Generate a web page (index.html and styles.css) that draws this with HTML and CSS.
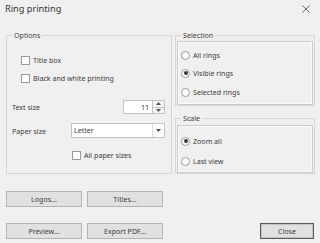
FILE: index.html
```html
<!DOCTYPE html>
<html lang="en">
<head>
  <meta charset="UTF-8">
  <title>Ring printing</title>
  <link rel="stylesheet" href="styles.css">
</head>
<body>
  <div class="dialog">
    <!-- Title bar -->
    <div class="titlebar">
      <span class="title">Ring printing</span>
      <svg class="close-x" width="8" height="8" viewBox="0 0 8 8">
        <path d="M0.5 0.5 L7.5 7.5 M7.5 0.5 L0.5 7.5" stroke="#444" stroke-width="0.8" fill="none"/>
      </svg>
    </div>

    <div class="groups">
      <fieldset class="group options">
        <legend>Options</legend>
        <label class="row check-row first"><span class="checkbox"></span>Title box</label>
        <label class="row check-row second"><span class="checkbox"></span>Black and white printing</label>
        <div class="row spin-row">
          <span>Text size</span>
          <div class="spin">
            <span class="spin-value">11</span>
            <div class="spin-buttons">
              <span class="spin-btn"><svg width="5" height="3" viewBox="0 0 5 3"><path d="M0 3 L2.5 0 L5 3 Z" fill="#555"/></svg></span>
              <span class="spin-btn"><svg width="5" height="3" viewBox="0 0 5 3"><path d="M0 0 L2.5 3 L5 0 Z" fill="#555"/></svg></span>
            </div>
          </div>
        </div>
        <div class="row combo-row">
          <span class="combo-label">Paper size</span>
          <div class="combo">
            <span class="combo-value">Letter</span>
            <span class="combo-btn"><svg width="5" height="3" viewBox="0 0 5 3"><path d="M0 0 L2.5 3 L5 0 Z" fill="#555"/></svg></span>
          </div>
        </div>
        <label class="row check-row all-sizes"><span class="checkbox"></span>All paper sizes</label>
      </fieldset>

      <div class="right-col">
        <fieldset class="group selection">
          <legend>Selection</legend>
          <div class="panel selection-panel">
            <label class="radio-row"><span class="radio"></span>All rings</label>
            <label class="radio-row"><span class="radio checked"></span>Visible rings</label>
            <label class="radio-row"><span class="radio"></span>Selected rings</label>
          </div>
        </fieldset>
        <fieldset class="group scale">
          <legend>Scale</legend>
          <div class="panel scale-panel">
            <label class="radio-row"><span class="radio checked"></span>Zoom all</label>
            <label class="radio-row"><span class="radio"></span>Last view</label>
          </div>
        </fieldset>
      </div>
    </div>

    <div class="button-row row-one">
      <button class="btn">Logos...</button>
      <button class="btn">Titles...</button>
    </div>
    <div class="button-row row-two">
      <button class="btn">Preview...</button>
      <button class="btn">Export PDF...</button>
      <button class="btn close-btn">Close</button>
    </div>
  </div>
</body>
</html>
```

FILE: styles.css
```css
/* Basic reset */
html, body {
  margin: 0;
  padding: 0;
  background: #f0f0f0;
}
body {
  font-family: "Noto Sans", "Open Sans", sans-serif;
  font-size: 7.1px;
  color: #3c3c3c;
}
.dialog {
  width: 320px;
  height: 243px;
  overflow: hidden;
}

/* Title bar */
.titlebar {
  height: 17px;
  display: flex;
  align-items: center;
  justify-content: space-between;
  padding: 0 10px 0 5px;
}
.title {
  font-size: 9.2px;
  color: #333;
}
.close-x {
  display: block;
}

/* Group boxes */
.groups {
  display: flex;
  gap: 3px;
  padding: 13px 5px 0 6px;
}
.group {
  margin: 0;
  padding: 0;
  border: 1px solid #d6d6d6;
  box-sizing: border-box;
}
.group legend {
  margin-left: 5px;
  padding: 0 2px;
  line-height: 10px;
}
.options {
  width: 166px;
  height: 144px;
}
.right-col {
  display: flex;
  flex-direction: column;
  width: 140px;
  gap: 7px;
}
.selection {
  height: 76px;
}
.scale {
  height: 61px;
}

/* Inner bordered panels in the right column */
.panel {
  margin: 1px 1px 0;
  border: 1px solid #cbcbcb;
  box-shadow: inset 0 0 0 1px #fafafa;
  padding: 0 3px;
  box-sizing: border-box;
}
.selection-panel {
  height: 64px;
  padding-top: 8px;
}
.scale-panel {
  margin-top: 2px;
  height: 48px;
  padding-top: 10px;
}

/* Rows in the options group */
.row {
  display: flex;
  align-items: center;
}
.check-row {
  height: 10px;
  padding-left: 14px;
}
.check-row.first { margin-top: 15px; }
.check-row.second { margin-top: 8px; }
.check-row.all-sizes {
  margin-top: 12px;
  padding-left: 65px;
}
.checkbox {
  width: 7px;
  height: 7px;
  border: 1px solid #9a9a9a;
  background: #fff;
  margin-right: 3px;
  flex: none;
}

.spin-row {
  margin-top: 17px;
  height: 14px;
  justify-content: space-between;
  padding: 0 6px 0 5px;
}
.spin {
  display: flex;
  height: 14px;
}
.spin-value {
  width: 30px;
  box-sizing: border-box;
  border: 1px solid #c2c2c2;
  background: #fff;
  text-align: right;
  padding-right: 3px;
  line-height: 12px;
}
.spin-buttons {
  display: flex;
  flex-direction: column;
  width: 12px;
}
.spin-btn {
  flex: 1;
  display: flex;
  align-items: center;
  justify-content: center;
  border: 1px solid #c2c2c2;
  border-left: none;
  background: #f4f4f4;
}
.spin-btn + .spin-btn {
  border-top: none;
}
.spin-btn svg {
  display: block;
}

.combo-row {
  margin-top: 9px;
  height: 15px;
  padding-left: 5px;
}
.combo-label {
  width: 59px;
}
.combo {
  display: flex;
  width: 94px;
  height: 15px;
  box-sizing: border-box;
  border: 1px solid #c2c2c2;
  background: #fff;
}
.combo-value {
  flex: 1;
  padding-left: 2px;
  line-height: 13px;
}
.combo-btn {
  width: 11px;
  display: flex;
  align-items: center;
  justify-content: center;
  border-left: 1px solid #dadada;
}
.combo-btn svg {
  display: block;
}

/* Radio buttons */
.radio-row {
  display: flex;
  align-items: center;
  height: 10px;
}
.selection-panel .radio-row + .radio-row { margin-top: 8px; }
.selection-panel .radio-row:last-child { margin-top: 9px; }
.scale-panel .radio-row + .radio-row { margin-top: 10px; }
.radio {
  width: 7px;
  height: 7px;
  border: 1px solid #9a9a9a;
  border-radius: 50%;
  background: #fff;
  margin-right: 3px;
  flex: none;
  display: flex;
  align-items: center;
  justify-content: center;
}
.radio.checked::after {
  content: "";
  width: 4px;
  height: 4px;
  border-radius: 50%;
  background: #3a3a3a;
}

/* Bottom buttons */
.button-row {
  display: flex;
  gap: 5px;
  padding: 0 6px;
}
.row-one { margin-top: 17px; }
.row-two { margin-top: 16px; }
.btn {
  width: 76px;
  height: 16px;
  padding: 0;
  border: 1px solid #b4b4b4;
  background: #e1e1e1;
  font-family: inherit;
  font-size: 7.1px;
  color: #3c3c3c;
}
.close-btn {
  width: 54px;
  margin-left: auto;
  border-color: #5a5a5a;
  box-shadow: inset 0 0 0 1px #c4c4c4;
}
```
